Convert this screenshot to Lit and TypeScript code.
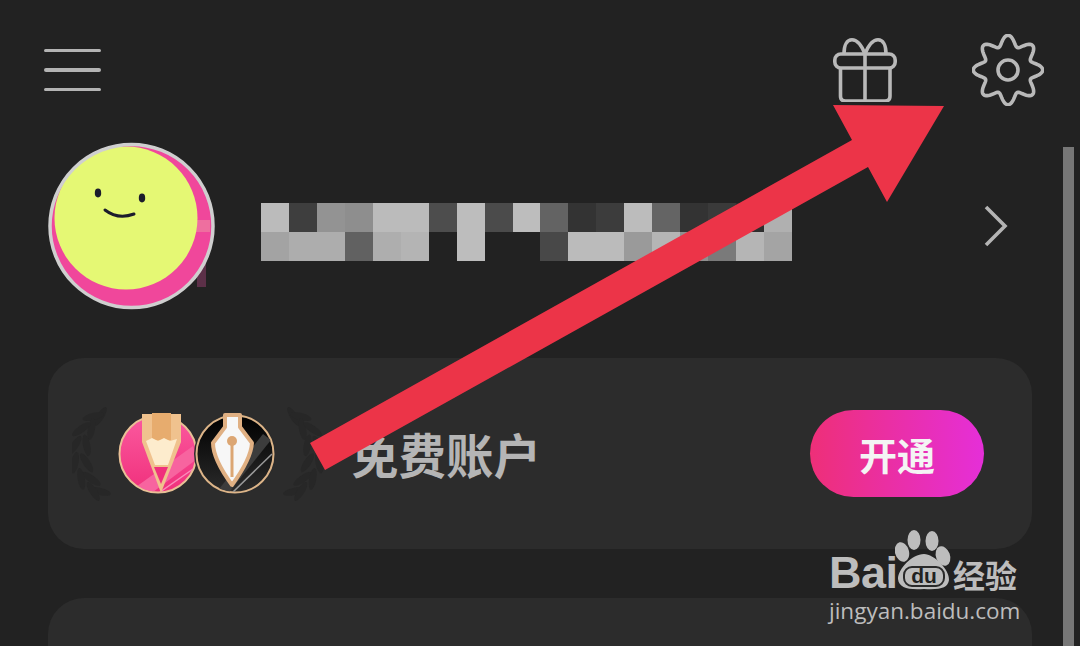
import { LitElement, html, css, svg } from 'lit';
import { customElement } from 'lit/decorators.js';

const MOSAIC = [
  '#bbb', '#3e3e3e', '#939393', '#8e8e8e', '#bbb', '#bbb', '#4d4d4d', '#bdbdbd', '#4b4b4b', '#bdbdbd',
  '#636363', '#333', '#3c3c3c', '#bcbcbc', '#646464', '#333', '#3a3a3a', '#2e2e2e', '#b0b0b0',
  '#a3a3a3', '#adadad', '#adadad', '#616161', '#aeaeae', '#b4b4b4', '#222', '#bdbdbd', '#222', '#222',
  '#484848', '#bbb', '#bbb', '#9a9a9a', '#b5b5b5', '#909090', '#7a7a7a', '#b5b5b5', '#a4a4a4',
];

// wavy outline of the settings gear, 8 lobes
function gearPath() {
  const pts: string[] = [];
  for (let i = 0; i < 240; i++) {
    const a = (i / 240) * Math.PI * 2;
    const r = 29.5 + 5.2 * Math.cos(8 * a);
    pts.push(`${(36 + r * Math.sin(a)).toFixed(2)} ${(36 - r * Math.cos(a)).toFixed(2)}`);
  }
  return `M${pts.join('L')}Z`;
}

// faint wreath behind the badges: two rows of thin leaves along an arc
function laurel(cx: number, dir: number) {
  const leaves = [];
  for (let i = 0; i < 6; i++) {
    const t = -0.95 + i * 0.38;
    for (const [radius, tilt] of [[34, -22], [46, 22]]) {
      const x = cx - dir * radius * Math.cos(t);
      const y = 455 + 46 * Math.sin(t);
      const rot = dir * (-t * 57 + tilt);
      leaves.push(
        svg`<ellipse cx=${x} cy=${y} rx="3.6" ry="11" transform="rotate(${rot} ${x} ${y})" fill="#272727"></ellipse>`,
      );
    }
  }
  return leaves;
}

@customElement('app-root')
export class AppRoot extends LitElement {
  static override styles = css`
    :host {
      display: block;
      position: relative;
      width: 1080px;
      height: 646px;
      overflow: hidden;
      background: #222;
      font-family: 'Noto Sans CJK SC', 'Liberation Sans', sans-serif;
    }
    svg {
      display: block;
      flex: none;
    }
    .topbar {
      display: flex;
      align-items: center;
      height: 72px;
      padding: 34px 36px 0 44px;
    }
    .burger {
      display: flex;
      flex-direction: column;
      gap: 16px;
      width: 57px;
      filter: blur(0.4px);
    }
    .burger span {
      height: 3.6px;
      background: #b4b4b4;
      border-radius: 2px;
    }
    .gift {
      margin-left: auto;
      filter: blur(0.4px);
    }
    .gear {
      margin-left: 75px;
      filter: blur(0.4px);
    }
    .profile {
      display: flex;
      align-items: center;
      height: 172px;
      margin-top: 34px;
      padding: 0 72px 0 46px;
    }
    .mosaic {
      display: grid;
      grid-template-columns: repeat(19, 1fr);
      grid-template-rows: 29px 29px;
      width: 531px;
      margin: 12px 0 0 43px;
    }
    .chevron {
      margin-left: auto;
    }
    .card {
      background: #2c2c2c;
      border-radius: 36px;
      margin-left: 48px;
      width: 984px;
    }
    .plan {
      display: flex;
      align-items: center;
      height: 191px;
      margin-top: 46px;
      padding: 0 48px 0 24px;
      box-sizing: border-box;
    }
    .plan-name {
      margin-left: 26px;
      font-size: 47.5px;
      font-weight: 700;
      color: #b5b5b5;
      line-height: 1;
    }
    .open {
      margin-left: auto;
      width: 174px;
      height: 87px;
      border-radius: 44px;
      background: linear-gradient(90deg, #ee2f78, #e52fd8);
      color: #f4f4f4;
      font-size: 38px;
      font-weight: 700;
      display: flex;
      align-items: center;
      justify-content: center;
    }
    .next {
      height: 120px;
      margin-top: 49px;
    }
    .scrollbar {
      position: absolute;
      left: 1063px;
      top: 147px;
      bottom: 0;
      width: 11px;
      background: #777;
    }
    .arrow {
      position: absolute;
      inset: 0;
    }
    .mark {
      position: absolute;
      left: 829px;
      top: 532px;
      color: #bdbdbd;
    }
    .mark-top {
      display: flex;
      align-items: flex-end;
      height: 60px;
    }
    .bai {
      font-family: 'Liberation Sans', sans-serif;
      font-weight: 700;
      font-size: 45px;
      line-height: 50px;
      width: 66px;
      letter-spacing: -0.5px;
      margin-bottom: -6px;
    }
    .jy {
      font-size: 32px;
      font-weight: 700;
      line-height: 48px;
      margin-bottom: -6px;
    }
    .domain {
      font-family: 'Open Sans', sans-serif;
      font-size: 22.5px;
      line-height: 30px;
      margin-top: 4px;
      white-space: nowrap;
    }
  `;

  private renderAvatar() {
    return html`<svg width="172" height="172" viewBox="46 140 172 172">
      <defs>
        <clipPath id="av"><circle cx="131.5" cy="226" r="81"></circle></clipPath>
      </defs>
      <rect x="197" y="260" width="9" height="27" fill="#5c3048"></rect>
      <g clip-path="url(#av)">
        <rect x="46" y="140" width="172" height="172" fill="#f0479b"></rect>
        <rect x="195" y="220" width="15" height="12" fill="#ee6f9f"></rect>
        <circle cx="126" cy="218" r="71.5" fill="#e5f874"></circle>
      </g>
      <circle cx="131.5" cy="226" r="81.5" fill="none" stroke="#cfcfcf" stroke-width="3.5"></circle>
      <ellipse cx="98" cy="193" rx="3.2" ry="4.4" fill="#1c1c2c"></ellipse>
      <ellipse cx="142" cy="198" rx="3.2" ry="4.4" fill="#1c1c2c"></ellipse>
      <path d="M105 210Q118 220 134 214" fill="none" stroke="#1c1c2c" stroke-width="3" stroke-linecap="round"></path>
    </svg>`;
  }

  private renderBadges() {
    return html`<svg width="253" height="110" viewBox="72 400 253 110">
      <defs>
        <linearGradient id="pk" x1="0" y1="0" x2="0" y2="1">
          <stop offset="0" stop-color="#fb5a9f"></stop>
          <stop offset="1" stop-color="#f0307c"></stop>
        </linearGradient>
        <linearGradient id="bk" x1="0" y1="0" x2="0" y2="1">
          <stop offset="0" stop-color="#000"></stop>
          <stop offset="1" stop-color="#2b2b2b"></stop>
        </linearGradient>
        <clipPath id="pc"><circle cx="158" cy="455" r="38"></circle></clipPath>
        <clipPath id="bc"><circle cx="235" cy="455" r="38"></circle></clipPath>
      </defs>
      ${laurel(120, 1)} ${laurel(274, -1)}
      <circle cx="158" cy="455" r="38.5" fill="url(#pk)" stroke="#e8c096" stroke-width="2"></circle>
      <g clip-path="url(#pc)">
        <path d="M133 490L193 447L197 460L153 493Z" fill="#f7649f"></path>
        <path d="M160 493L193 470" stroke="#fa8cb9" stroke-width="1.5"></path>
      </g>
      <path d="M142 415H181V443L161 494L142 443Z" fill="#f0c28e"></path>
      <path d="M152 414H171V441H152Z" fill="#e7ac6e"></path>
      <path d="M146 442L152 439L158 442L164 439L170 442L177 440L168 466H155Z" fill="#fdeccd"></path>
      <path d="M154 468H168L161 485Z" fill="#f0307c"></path>

      <circle cx="235" cy="455" r="41" fill="#2c2c2c"></circle>
      <circle cx="235" cy="455" r="38.5" fill="url(#bk)" stroke="#dcb488" stroke-width="2"></circle>
      <g clip-path="url(#bc)">
        <path d="M219 490L263 435L271 441L227 496Z" fill="#3c3c3c"></path>
        <path d="M233 493L272 455" stroke="#9a9a9a" stroke-width="1.5"></path>
      </g>
      <path d="M225 416H240V428L252 444Q251 460 232 486Q213 460 213 444L225 428Z" fill="#f7f7f7" stroke="#e0b083" stroke-width="4" stroke-linejoin="round"></path>
      <circle cx="232" cy="442" r="5" fill="#dca673"></circle>
      <path d="M232 442V478" stroke="#dca673" stroke-width="3"></path>
    </svg>`;
  }

  override render() {
    return html`
      <div class="topbar">
        <div class="burger"><span></span><span></span><span></span></div>
        <svg class="gift" width="64" height="64" viewBox="0 0 64 64" fill="none" stroke="#b9b9b9" stroke-width="3.6" stroke-linejoin="round">
          <rect x="1.8" y="16" width="60.4" height="14" rx="6"></rect>
          <path d="M7.5 30V58Q7.5 63 12.5 63H52Q57 63 57 58V30"></path>
          <path d="M32 16V63"></path>
          <path d="M32 16C28 6 24 1.8 19 1.8C14 1.8 11 7 11 16"></path>
          <path d="M32 16C36 6 40 1.8 45 1.8C50 1.8 53 7 53 16"></path>
        </svg>
        <svg class="gear" width="72" height="72" viewBox="0 0 72 72" fill="none" stroke="#b9b9b9" stroke-width="3.6">
          <path d=${gearPath()}></path>
          <circle cx="36" cy="36" r="10"></circle>
        </svg>
      </div>

      <div class="profile">
        ${this.renderAvatar()}
        <div class="mosaic">
          ${MOSAIC.map((c) => html`<div style="background:${c}"></div>`)}
        </div>
        <svg class="chevron" width="24" height="42" viewBox="0 0 24 42" fill="none" stroke="#b4b4b4" stroke-width="3.6">
          <path d="M2 2L21 21L2 40"></path>
        </svg>
      </div>

      <div class="card plan">
        ${this.renderBadges()}
        <div class="plan-name">免费账户</div>
        <div class="open">开通</div>
      </div>
      <div class="card next"></div>

      <div class="scrollbar"></div>

      <svg class="arrow" width="1080" height="646" viewBox="0 0 1080 646">
        <path d="M310 443L852 140L833 105L944 106L887 202L868 167L325 470Z" fill="#ec3448"></path>
      </svg>

      <div class="mark">
        <div class="mark-top">
          <div class="bai">Bai</div>
          <svg width="58" height="62" viewBox="895 532 58 62">
            <ellipse cx="914" cy="542" rx="6.5" ry="10" fill="#bdbdbd"></ellipse>
            <ellipse cx="932" cy="543" rx="6.5" ry="10" fill="#bdbdbd"></ellipse>
            <ellipse cx="902" cy="554" rx="7" ry="10" fill="#bdbdbd" transform="rotate(-15 902 554)"></ellipse>
            <ellipse cx="943" cy="558" rx="7" ry="10" fill="#bdbdbd" transform="rotate(-20 943 558)"></ellipse>
            <path d="M924 556C934 556 950 572 949 582C948 590 940 592 924 591C908 592 899 590 898 581C898 571 912 556 924 556Z" fill="#bdbdbd"></path>
            <rect x="904" y="569" width="40" height="19" rx="8" fill="none" stroke="#2a2a2a" stroke-width="2"></rect>
            <text x="924" y="585" text-anchor="middle" font-family="Liberation Sans" font-weight="700" font-size="21" fill="#222">du</text>
          </svg>
          <div class="jy">经验</div>
        </div>
        <div class="domain">jingyan.baidu.com</div>
      </div>
    `;
  }
}
